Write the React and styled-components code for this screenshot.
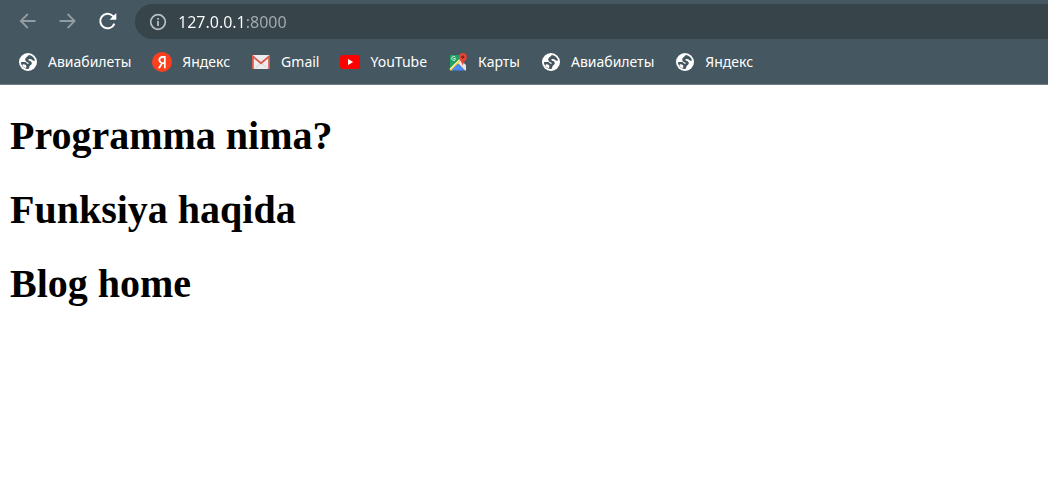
import React from "react";
import styled, { createGlobalStyle } from "styled-components";

const GlobalStyle = createGlobalStyle`
  * { box-sizing: border-box; }
  body { margin: 0; background: #fff; }
`;

const uiFont = `"Segoe UI", "Noto Sans", "Open Sans", sans-serif`;

const Chrome = styled.header`
  background: #455760;
  border-bottom: 1px solid #737f86;
  font-family: ${uiFont};
  color: #fff;
`;

const Toolbar = styled.div`
  display: flex;
  align-items: center;
  padding: 4px 0 0 8px;
`;

const NavButton = styled.button`
  display: flex;
  align-items: center;
  justify-content: center;
  width: 40px;
  height: 35px;
  padding: 0 0 2px;
  border: 0;
  background: none;
  color: ${(p) => (p.$active ? "#ffffff" : "#929ca1")};
`;

const AddressBar = styled.div`
  flex: 1;
  display: flex;
  align-items: center;
  gap: 10px;
  height: 35px;
  margin-left: 7px;
  padding-left: 13px;
  background: #37444a;
  border-radius: 18px 0 0 18px;
`;

const Address = styled.input`
  flex: 1;
  min-width: 0;
  height: 24px;
  padding: 0;
  border: 0;
  outline: 0;
  font: 16px/24px ${uiFont};
  color: transparent;
  background: linear-gradient(90deg, #ffffff 67px, #a6adb1 67px);
  background-clip: text;
`;

const Bookmarks = styled.nav`
  display: flex;
  align-items: center;
  gap: 21px;
  height: 45px;
  padding-left: 18px;
`;

const Bookmark = styled.a`
  display: flex;
  align-items: center;
  gap: 10px;
  font-size: 14px;
  line-height: 20px;
  color: #fff;
  text-decoration: none;
  white-space: nowrap;
`;

const Icon = styled.svg`
  display: block;
  flex: none;
`;

const Content = styled.main`
  padding: 28px 10px;
`;

const Heading = styled.h1`
  margin: 0 0 28px;
  font: bold 40px/46px "Liberation Serif", "Times New Roman", serif;
  color: #000;
`;

const BackIcon = () => (
  <Icon width="20" height="20" viewBox="0 0 20 20" fill="none" stroke="currentColor" strokeWidth="1.8">
    <path d="M17.6 10H3M9.8 3L2.8 10L9.8 17" />
  </Icon>
);

const ForwardIcon = () => (
  <Icon width="20" height="20" viewBox="0 0 20 20" fill="none" stroke="currentColor" strokeWidth="1.8">
    <path d="M1.6 10H16.6M9.6 3L16.6 10L9.6 17" />
  </Icon>
);

const ReloadIcon = () => (
  <Icon width="20" height="20" viewBox="0 0 20 20" fill="none">
    <path d="M16.4 12.6A7.3 7.3 0 1 1 14.8 4.9L16.2 6.4" stroke="currentColor" strokeWidth="2" />
    <path d="M18.3 2V8.8H11.5Z" fill="currentColor" />
  </Icon>
);

const InfoIcon = () => (
  <Icon width="20" height="20" viewBox="0 0 20 20" fill="none" stroke="#b9bfc2">
    <circle cx="10" cy="10" r="7.3" strokeWidth="1.7" />
    <path d="M10 9V14M10 6V7.8" strokeWidth="1.8" />
  </Icon>
);

const GlobeIcon = () => (
  <Icon width="20" height="20" viewBox="0 0 20 20">
    <circle cx="10" cy="10" r="9" fill="#fff" />
    <path
      d="M10.8 3C13.8 3.3 16.3 5.4 17 8.4C15.8 9 14.8 8.6 14 7.8C13.2 7 12.2 7 11.2 7.1C10 7.3 10.1 8.5 11.2 8.7C13 9 14 10 13.8 11.6C13.6 13 12 13.1 11.5 14.2C11.1 15.2 11.3 16.2 10.2 17C7.2 17 4.4 15.2 3.2 12C3 11.3 3 10.6 3.1 10H7.2C8.4 10.2 8.6 11.8 9.8 11.8C11 11.7 11.2 10.9 10 10.4C8.4 9.8 7.2 9 7.2 7.4C7.2 5.4 9.4 5.2 10.8 3Z"
      fill="#455760"
    />
    <path d="M5 12.2C6.8 12 8.2 13 8.4 14.2C8.5 15 8 15.6 7.4 16.2L4.2 14Z" fill="#fff" />
  </Icon>
);

const YandexIcon = () => (
  <Icon width="20" height="20" viewBox="0 0 20 20">
    <circle cx="10" cy="10" r="10" fill="#fc3f1d" />
    <path d="M12.8 4V16.3M12.8 5H10.6C8.4 5 7.3 6.2 7.3 7.9C7.3 9.5 8.2 10.3 10 11.4L6.9 16.3M12.8 11.2H10.3" fill="none" stroke="#fff" strokeWidth="1.8" />
  </Icon>
);

const GmailIcon = () => (
  <Icon width="20" height="20" viewBox="0 0 20 20">
    <rect x="1" y="3" width="18" height="14" rx="1.4" fill="#ececec" />
    <path d="M4 16.5L10 10.5L16 16.5" fill="none" stroke="#d2d2d2" />
    <path d="M1.9 17V4.4L10 11.2L18.1 4.4V17" fill="none" stroke="#d9594c" strokeWidth="1.8" />
  </Icon>
);

const YouTubeIcon = () => (
  <Icon width="20" height="20" viewBox="0 0 20 20">
    <rect x="0" y="3" width="20" height="14" rx="3" fill="#f00" />
    <path d="M8 7V13L13.2 10Z" fill="#fff" />
  </Icon>
);

const MapsIcon = () => (
  <Icon width="20" height="20" viewBox="0 0 20 20">
    <path d="M2 3H16V10L2 18Z" fill="#1ea362" />
    <path d="M1.5 16.8L12 6.3L14.2 8.5L4 18.5H2Z" fill="#fbcf2d" />
    <path d="M3 18.5L10 11.5L16.5 18.5Z" fill="#4a89f3" />
    <path d="M10.2 11.3L13 8.5L18 13V18.5H17Z" fill="#e6e6e6" />
    <path d="M2.2 17L12.5 6.7" stroke="#fff" strokeWidth="1" />
    <path d="M7.5 6.5H5.6M7.3 5.2A2 2 0 1 0 7.6 7" stroke="#d9f1e4" strokeWidth="1" fill="none" />
    <path d="M14.8 1A4 4 0 0 0 10.8 5C10.8 8.4 14.2 9.4 14.8 14C15.4 9.4 18.8 8.4 18.8 5A4 4 0 0 0 14.8 1Z" fill="#e54335" />
    <circle cx="14.8" cy="5" r="1.5" fill="#7e231b" />
  </Icon>
);

const bookmarks = [
  { label: "Авиабилеты", icon: GlobeIcon },
  { label: "Яндекс", icon: YandexIcon },
  { label: "Gmail", icon: GmailIcon },
  { label: "YouTube", icon: YouTubeIcon },
  { label: "Карты", icon: MapsIcon },
  { label: "Авиабилеты", icon: GlobeIcon },
  { label: "Яндекс", icon: GlobeIcon },
];

const posts = ["Programma nima?", "Funksiya haqida", "Blog home"];

export default function App() {
  return (
    <>
      <GlobalStyle />
      <Chrome>
        <Toolbar>
          <NavButton type="button" aria-label="Back"><BackIcon /></NavButton>
          <NavButton type="button" aria-label="Forward"><ForwardIcon /></NavButton>
          <NavButton type="button" aria-label="Reload" $active><ReloadIcon /></NavButton>
          <AddressBar>
            <InfoIcon />
            <Address type="text" aria-label="Address" defaultValue="127.0.0.1:8000" spellCheck={false} />
          </AddressBar>
        </Toolbar>
        <Bookmarks aria-label="Bookmarks">
          {bookmarks.map(({ label, icon: Glyph }, i) => (
            <Bookmark href="#" key={i}>
              <Glyph />
              {label}
            </Bookmark>
          ))}
        </Bookmarks>
      </Chrome>
      <Content>
        {posts.map((title) => (
          <Heading key={title}>{title}</Heading>
        ))}
      </Content>
    </>
  );
}
